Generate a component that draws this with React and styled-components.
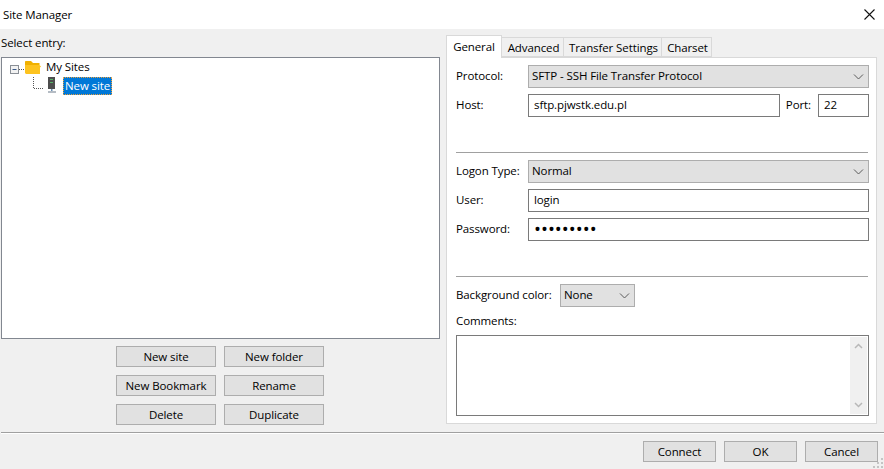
import React from "react";
import styled, { createGlobalStyle } from "styled-components";

const GlobalStyle = createGlobalStyle`
    html, body {
        margin: 0;
        padding: 0;
        background: #f0f0f0;
    }
    body {
        font-family: "Open Sans", "Noto Sans", sans-serif;
        font-size: 11.5px;
        letter-spacing: -0.1px;
        color: #000;
    }
`;

const Window = styled.div`
    width: 884px;
    height: 469px;
    display: flex;
    flex-direction: column;
    position: relative;
    overflow: hidden;
    background: #f0f0f0;
`;

const TitleBar = styled.div`
    height: 29px;
    flex: none;
    background: #fff;
    display: flex;
    align-items: center;
    justify-content: space-between;
    padding: 0 9px 1px 3px;
    box-sizing: border-box;
`;

const Body = styled.div`
    height: 403px;
    flex: none;
    display: flex;
    box-sizing: border-box;
    padding-left: 1px;
`;

const LeftColumn = styled.div`
    width: 439px;
    flex: none;
    display: flex;
    flex-direction: column;
`;

const SelectLabel = styled.div`
    height: 28px;
    line-height: 28px;
`;

const TreeBox = styled.div`
    height: 282px;
    box-sizing: border-box;
    border: 1px solid #828790;
    background: #fff;
    padding-left: 8px;
`;

const RootRow = styled.div`
    display: flex;
    align-items: center;
    height: 18px;
`;

const ChildRow = styled.div`
    display: flex;
    align-items: flex-end;
    height: 19px;
    padding-left: 22px;
`;

const RootLabel = styled.span`
    margin-left: 5px;
    padding-bottom: 1px;
`;

const SelectedLabel = styled.span`
    margin-left: 4px;
    height: 18px;
    line-height: 16px;
    padding: 0 1px;
    box-sizing: border-box;
    background: #0078d7;
    color: #fff;
    border: 1px dotted #e8a040;
`;

const ButtonGrid = styled.div`
    display: grid;
    grid-template-columns: 100px 100px;
    grid-auto-rows: 21px;
    gap: 8px;
    padding-left: 115px;
    margin-top: 7px;
`;

const Button = styled.button`
    font: inherit;
    letter-spacing: inherit;
    color: #000;
    padding: 0;
    height: 21px;
    width: ${(props) => props.$width || 100}px;
    box-sizing: border-box;
    background: #e1e1e1;
    border: 1px solid #adadad;
`;

const RightColumn = styled.div`
    width: 431px;
    margin-left: 6px;
    flex: none;
    display: flex;
    flex-direction: column;
    padding-top: 6px;
    box-sizing: border-box;
`;

const TabBar = styled.div`
    display: flex;
    align-items: flex-end;
    height: 22px;
    flex: none;
    position: relative;
    z-index: 1;
`;

const Tab = styled.div`
    width: ${(props) => props.$width}px;
    height: ${(props) => (props.$active ? 23 : 20)}px;
    margin-bottom: ${(props) => (props.$active ? -1 : 0)}px;
    margin-left: -1px;
    padding: ${(props) => (props.$active ? "0 0 2px 0" : "0 0 0 2px")};
    box-sizing: border-box;
    border: 1px solid #d9d9d9;
    border-bottom: ${(props) => (props.$active ? "none" : "1px solid #d9d9d9")};
    background: ${(props) => (props.$active ? "#fff" : "#f0f0f0")};
    display: flex;
    align-items: center;
    justify-content: center;
    &:first-child {
        margin-left: 0;
    }
`;

const TabPanel = styled.div`
    height: 367px;
    box-sizing: border-box;
    border: 1px solid #d9d9d9;
    background: #fff;
    padding: 7px 7px 7px 9px;
    display: flex;
    flex-direction: column;
`;

const FieldRow = styled.div`
    display: flex;
    align-items: center;
    height: 23px;
    flex: none;
    margin-top: ${(props) => (props.$first ? 0 : 6)}px;
`;

const FieldLabel = styled.label`
    width: ${(props) => props.$width || 72}px;
    flex: none;
    margin-bottom: 2px;
`;

const PortLabel = styled.label`
    margin: 0 7px 2px 6px;
`;

const TextInput = styled.input`
    font-family: inherit;
    font-size: ${(props) => (props.type === "password" ? "18.500px" : "inherit")};
    letter-spacing: ${(props) => (props.type === "password" ? "0" : "inherit")};
    color: #000;
    height: 23px;
    flex: ${(props) => (props.$width ? "none" : "1")};
    width: ${(props) => props.$width || 0}px;
    min-width: 0;
    box-sizing: border-box;
    border: 1px solid #7a7a7a;
    padding: 0 5px 2px;
    outline: none;
`;

const ComboBox = styled.div`
    height: 23px;
    flex: ${(props) => (props.$width ? "none" : "1")};
    width: ${(props) => props.$width || 0}px;
    box-sizing: border-box;
    background: #e1e1e1;
    border: 1px solid #adadad;
    padding: 0 4px 2px 3px;
    display: flex;
    align-items: center;
    justify-content: space-between;
`;

const ComboArrow = styled.svg`
    margin-top: 2px;
`;

const Divider = styled.div`
    height: 1px;
    flex: none;
    background: #a0a0a0;
    margin: 35px 1px 7px 0;
`;

const CommentsLabel = styled.div`
    height: 28px;
    line-height: 28px;
    flex: none;
`;

const CommentsBox = styled.div`
    height: 81px;
    flex: none;
    box-sizing: border-box;
    border: 1px solid #7a7a7a;
    display: flex;
    justify-content: flex-end;
    padding: 1px;
`;

const ScrollTrack = styled.div`
    width: 17px;
    background: #f0f0f0;
    display: flex;
    flex-direction: column;
    justify-content: space-between;
    align-items: center;
    padding: 6px 0;
    box-sizing: border-box;
`;

const FooterRule = styled.div`
    height: 1px;
    flex: none;
    margin-left: 1px;
    background: #a0a0a0;
    box-shadow: 0 1px 0 #fff;
`;

const Footer = styled.div`
    flex: 1;
    display: flex;
    justify-content: flex-end;
    gap: 8px;
    padding: 8px 6px 0 0;
`;

const SizeGrip = styled.svg`
    position: absolute;
    right: 0;
    bottom: 0;
`;

const Chevron = () => (
    <ComboArrow width="11" height="6" viewBox="0 0 11 6">
        <path d="M1 .5 5.500 5 10 .5" fill="none" stroke="#5a5a5a" strokeWidth="1" />
    </ComboArrow>
);

const CloseIcon = () => (
    <svg width="11" height="11" viewBox="0 0 11 11">
        <path d="M.5.5l10 10M10.500.5l-10 10" stroke="#111" strokeWidth="1.100" fill="none" />
    </svg>
);

const FolderNode = () => (
    <svg width="31" height="16" viewBox="0 0 31 16">
        <rect x=".5" y="6.500" width="8" height="8" fill="#f2f2f2" stroke="#8a8f96" />
        <path d="M2.500 10.500h4" stroke="#3a5a8a" />
        <path d="M9 10.500h6" stroke="#555" strokeDasharray="1 1" />
        <path d="M15 3c0-.6.4-1 1-1h5l2 2h6.500v2H15z" fill="#f0b000" />
        <path d="M15 6h14.500l1.500 1.500-1 1v6.500H16l-1-1z" fill="#fdc31f" />
    </svg>
);

const ServerNode = () => (
    <svg width="27" height="18" viewBox="0 0 27 18">
        <path d="M1.500 0v11.500H12" stroke="#555" strokeDasharray="1 1" fill="none" />
        <rect x="16" y="0" width="7" height="12" fill="#4d4d4d" />
        <rect x="18" y="2" width="3" height="1" fill="#58b368" />
        <rect x="18" y="5" width="3" height="1" fill="#58b368" />
        <rect x="19" y="12" width="1.500" height="2" fill="#6b8fb5" />
        <rect x="16" y="14" width="8" height="2" fill="#b5bcc4" />
    </svg>
);

export default function App() {
    return (
        <Window>
            <GlobalStyle />
            <TitleBar>
                <span>Site Manager</span>
                <CloseIcon />
            </TitleBar>
            <Body>
                <LeftColumn>
                    <SelectLabel>Select entry:</SelectLabel>
                    <TreeBox>
                        <RootRow>
                            <FolderNode />
                            <RootLabel>My Sites</RootLabel>
                        </RootRow>
                        <ChildRow>
                            <ServerNode />
                            <SelectedLabel>New site</SelectedLabel>
                        </ChildRow>
                    </TreeBox>
                    <ButtonGrid>
                        <Button>New site</Button>
                        <Button>New folder</Button>
                        <Button>New Bookmark</Button>
                        <Button>Rename</Button>
                        <Button>Delete</Button>
                        <Button>Duplicate</Button>
                    </ButtonGrid>
                </LeftColumn>
                <RightColumn>
                    <TabBar>
                        <Tab $active $width={56}>General</Tab>
                        <Tab $width={63}>Advanced</Tab>
                        <Tab $width={99}>Transfer Settings</Tab>
                        <Tab $width={51}>Charset</Tab>
                    </TabBar>
                    <TabPanel>
                        <FieldRow $first>
                            <FieldLabel>Protocol:</FieldLabel>
                            <ComboBox>
                                SFTP - SSH File Transfer Protocol
                                <Chevron />
                            </ComboBox>
                        </FieldRow>
                        <FieldRow>
                            <FieldLabel>Host:</FieldLabel>
                            <TextInput readOnly value="sftp.pjwstk.edu.pl" />
                            <PortLabel>Port:</PortLabel>
                            <TextInput readOnly $width={51} value="22" />
                        </FieldRow>
                        <Divider />
                        <FieldRow $first>
                            <FieldLabel>Logon Type:</FieldLabel>
                            <ComboBox>
                                Normal
                                <Chevron />
                            </ComboBox>
                        </FieldRow>
                        <FieldRow>
                            <FieldLabel>User:</FieldLabel>
                            <TextInput readOnly value="login" />
                        </FieldRow>
                        <FieldRow>
                            <FieldLabel>Password:</FieldLabel>
                            <TextInput readOnly type="password" value="123456789" />
                        </FieldRow>
                        <Divider />
                        <FieldRow $first>
                            <FieldLabel $width={104}>Background color:</FieldLabel>
                            <ComboBox $width={75}>
                                None
                                <Chevron />
                            </ComboBox>
                        </FieldRow>
                        <CommentsLabel>Comments:</CommentsLabel>
                        <CommentsBox>
                            <ScrollTrack>
                                <svg width="9" height="6" viewBox="0 0 9 6">
                                    <path d="M1 5l3.500-3.500L8 5" fill="none" stroke="#b8b8b8" strokeWidth="1.500" />
                                </svg>
                                <svg width="9" height="6" viewBox="0 0 9 6">
                                    <path d="M1 1l3.500 3.500L8 1" fill="none" stroke="#b8b8b8" strokeWidth="1.500" />
                                </svg>
                            </ScrollTrack>
                        </CommentsBox>
                    </TabPanel>
                </RightColumn>
            </Body>
            <FooterRule />
            <Footer>
                <Button $width={73}>Connect</Button>
                <Button $width={73}>OK</Button>
                <Button $width={73}>Cancel</Button>
            </Footer>
            <SizeGrip width="12" height="12" viewBox="0 0 12 12">
                <path d="M9 1h2v2H9zM5 5h2v2H5zM9 5h2v2H9zM1 9h2v2H1zM5 9h2v2H5zM9 9h2v2H9z" fill="#c4c4c4" />
            </SizeGrip>
        </Window>
    );
}
